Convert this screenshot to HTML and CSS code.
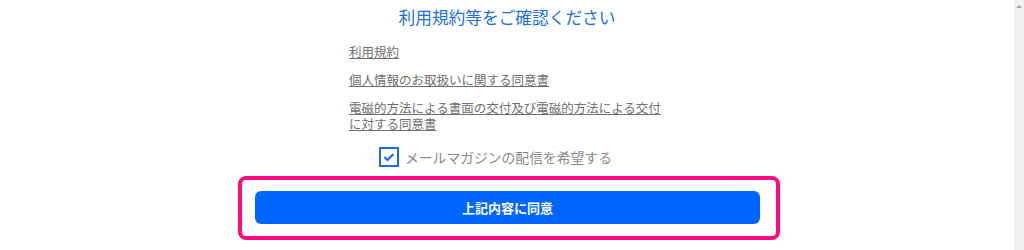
FILE: index.html
```html
<!doctype html>
<html>

<head>
  <meta charset="utf-8">
  <title>利用規約等をご確認ください</title>
  <link rel="stylesheet" href="styles.css">
</head>

<body>
  <div id="page">
    <div class="main">
      <h2 class="title">利用規約等をご確認ください</h2>

      <div class="docs">
        <a class="docs__link" href="#">利用規約</a>
        <a class="docs__link" href="#">個人情報のお取扱いに関する同意書</a>
        <a class="docs__link" href="#">電磁的方法による書面の交付及び電磁的方法による交付に対する同意書</a>

        <label class="mailmag">
          <span class="mailmag__box">
            <svg width="12" height="10" viewBox="0 0 12 10">
              <polyline points="1.5 5 4.5 8 10.5 2" style="fill:none;stroke:#1a6ee6;stroke-width:2.2" />
            </svg>
          </span>
          <span class="mailmag__text">メールマガジンの配信を希望する</span>
        </label>
      </div>

      <div class="agree">
        <button class="agree__btn" type="button">上記内容に同意</button>
      </div>
    </div>

    <div class="scrollbar">
      <span class="scrollbar__arrow"></span>
    </div>
  </div>
</body>

</html>
```

FILE: styles.css
```css
* {
  margin: 0;
  box-sizing: border-box;
}

body {
  margin: 0;
  background: #fff;
  font-family: "Noto Sans CJK JP", "Noto Sans", sans-serif;
}

#page {
  display: flex;
  height: 250px;
  overflow: hidden;
}

.main {
  flex: 1;
}

.title {
  margin-top: 5px;
  font-size: 16.7px;
  line-height: 24px;
  font-weight: normal;
  text-align: center;
  color: #1a6ee6;
}

.docs {
  width: 316px;
  margin: 15px auto 0;
  display: flex;
  flex-direction: column;
  align-items: flex-start;
}

.docs__link {
  font-size: 12.5px;
  line-height: 16px;
  color: #707070;
  text-decoration: underline;
  margin-bottom: 12px;
}

.mailmag {
  display: flex;
  align-items: center;
  gap: 6px;
  margin-top: 3px;
  padding-left: 30px;
  cursor: pointer;
}

.mailmag__box {
  width: 20px;
  height: 20px;
  border: 2px solid #1a6ee6;
  background: #fff;
  display: flex;
  align-items: center;
  justify-content: center;
}

.mailmag__text {
  font-size: 13.8px;
  line-height: 20px;
  color: #8a8a8a;
}

.agree {
  width: 542px;
  margin: 9px 0 0 238px;
  padding: 11px 16px 12px 13px;
  border: 4px solid #ff0a84;
  border-radius: 8px;
}

.agree__btn {
  display: block;
  width: 100%;
  height: 33px;
  border: 0;
  border-radius: 6px;
  background: #0066ff;
  color: #fff;
  font-family: inherit;
  font-size: 13px;
  font-weight: bold;
  cursor: pointer;
}

.scrollbar {
  width: 10px;
  background: #f1f1f1;
  display: flex;
  justify-content: center;
  padding-top: 5px;
}

.scrollbar__arrow {
  width: 0;
  height: 0;
  border-left: 3px solid transparent;
  border-right: 3px solid transparent;
  border-bottom: 3px solid #a3a3a3;
}
```
